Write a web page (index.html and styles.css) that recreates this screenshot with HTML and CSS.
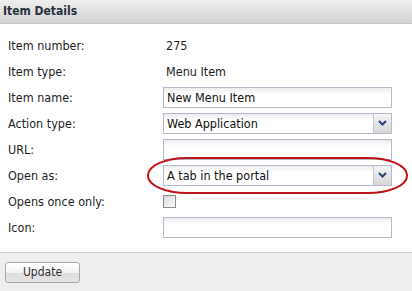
FILE: index.html
```html
<!DOCTYPE html>
<html>
<head>
  <title>Item Details</title>
  <link rel="stylesheet" href="styles.css">
</head>
<body>
  <div class="panel">
    <div class="panel-head">Item Details</div>
    <form class="details">
      <div class="row"><label>Item number:</label><span class="value">275</span></div>
      <div class="row"><label>Item type:</label><span class="value">Menu Item</span></div>
      <div class="row"><label>Item name:</label><input type="text" class="field" value="New Menu Item"></div>
      <div class="row"><label>Action type:</label>
        <div class="combo"><span>Web Application</span><i class="arrow"><svg width="9" height="6" viewBox="0 0 9 6"><path d="M1 1 L4.5 4.5 L8 1" fill="none" stroke="#26457a" stroke-width="2"/></svg></i></div>
      </div>
      <div class="row"><label>URL:</label><input type="text" class="field" value=""></div>
      <div class="row highlight"><label>Open as:</label>
        <div class="combo"><span>A tab in the portal</span><i class="arrow"><svg width="9" height="6" viewBox="0 0 9 6"><path d="M1 1 L4.5 4.5 L8 1" fill="none" stroke="#26457a" stroke-width="2"/></svg></i></div>
        <div class="ring"></div>
      </div>
      <div class="row"><label>Opens once only:</label><span class="check"></span></div>
      <div class="row"><label>Icon:</label><input type="text" class="field" value=""></div>
    </form>
    <div class="panel-foot">
      <button type="button" class="btn">Update</button>
    </div>
  </div>
</body>
</html>
```

FILE: styles.css
```css
body { margin: 0; font-family: "DejaVu Sans Condensed", "DejaVu Sans", sans-serif; font-size: 12.5px; color: #1e1e1e; background: #fff; }
.panel { width: 412px; height: 291px; display: flex; flex-direction: column; }
.panel-head { height: 23px; line-height: 22px; padding-left: 3px; font-size: 12px; font-weight: bold; color: #27313d; background: linear-gradient(#eeeeee, #d3d3d3); border-bottom: 1px solid #c4c4c4; }
.details { padding: 8px 0 0 0; flex: 1; }
.row { position: relative; height: 26px; display: grid; grid-template-columns: 163px 229px; align-items: center; }
.row label { padding-left: 8px; }
.value { padding-left: 3px; }
.field { box-sizing: border-box; width: 229px; height: 21px; margin: 0; padding: 0 3px; font: inherit; color: #111; border: 1px solid #b5b8c8; border-radius: 0; background: linear-gradient(#ececec, #fff 6px); outline: none; }
.combo { box-sizing: border-box; width: 229px; height: 21px; display: flex; align-items: center; border: 1px solid #b5b8c8; background: linear-gradient(#ececec, #fff 6px); }
.combo span { flex: 1; padding-left: 3px; color: #111; }
.arrow { width: 17px; height: 19px; display: flex; align-items: center; justify-content: center; border-left: 1px solid #c4c7d4; background: linear-gradient(#f4f4f4, #d6d6d6); }
.check { width: 11px; height: 11px; border: 1px solid #8a8a8a; background: linear-gradient(135deg, #dcdcdc, #fafafa); }
.ring { position: absolute; left: 147px; top: -5px; width: 257px; height: 33px; border: 2px solid #c0141c; border-radius: 40px / 18px; pointer-events: none; }
.panel-foot { height: 38px; border-top: 1px solid #cfcfcf; background: #eeeeee; display: flex; align-items: center; padding-left: 5px; }
.btn { width: 75px; height: 21px; font: inherit; font-size: 12px; color: #333; border: 1px solid #a8a8a8; border-radius: 3px; background: linear-gradient(#ffffff 0%, #f3f3f3 50%, #dedede 55%, #e4e4e4 100%); padding: 0; }
```
